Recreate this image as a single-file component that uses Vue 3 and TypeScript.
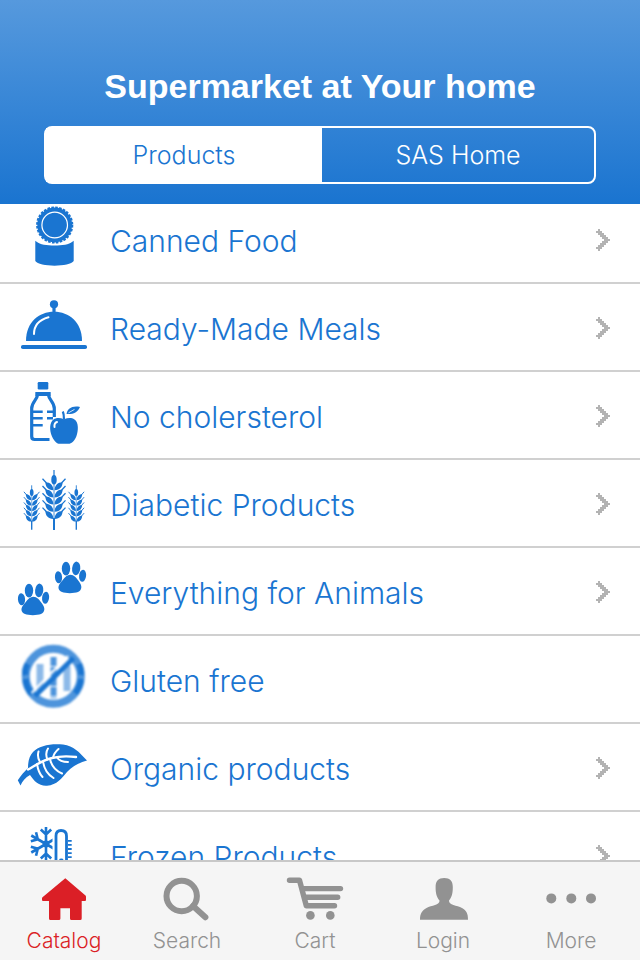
<script setup lang="ts">
import { ref } from 'vue'

type CategoryIcon = 'can' | 'cloche' | 'bottle' | 'wheat' | 'paws' | 'gluten' | 'leaf' | 'frozen'
type TabIcon = 'home' | 'search' | 'cart' | 'user' | 'dots'

interface Category {
  icon: CategoryIcon
  label: string
  hasChildren: boolean
}

interface Tab {
  icon: TabIcon
  label: string
}

const categories: Category[] = [
  { icon: 'can', label: 'Canned Food', hasChildren: true },
  { icon: 'cloche', label: 'Ready-Made Meals', hasChildren: true },
  { icon: 'bottle', label: 'No cholersterol', hasChildren: true },
  { icon: 'wheat', label: 'Diabetic Products', hasChildren: true },
  { icon: 'paws', label: 'Everything for Animals', hasChildren: true },
  { icon: 'gluten', label: 'Gluten free', hasChildren: false },
  { icon: 'leaf', label: 'Organic products', hasChildren: true },
  { icon: 'frozen', label: 'Frozen Products', hasChildren: true },
]

const tabs: Tab[] = [
  { icon: 'home', label: 'Catalog' },
  { icon: 'search', label: 'Search' },
  { icon: 'cart', label: 'Cart' },
  { icon: 'user', label: 'Login' },
  { icon: 'dots', label: 'More' },
]

const segments = ['Products', 'SAS Home']
const activeSegment = ref('Products')
const activeTab = ref('Catalog')

// Wheat ears: placement of each ear inside the icon.
const ears = [
  'translate(54 10)',
  'translate(31.7 25.3) scale(.68 .74)',
  'translate(76.3 25.3) scale(.68 .74)',
]
const grainRows = [16, 23.2, 30.4, 37.6, 44.8]
</script>

<template>
  <div class="app">
    <header class="header">
      <h1 class="title">Supermarket at Your home</h1>
      <div class="segmented">
        <button
          v-for="segment in segments"
          :key="segment"
          type="button"
          class="segment"
          :class="{ active: segment === activeSegment }"
          :aria-pressed="segment === activeSegment"
          @click="activeSegment = segment"
        >
          {{ segment }}
        </button>
      </div>
    </header>

    <main class="content">
      <ul class="list">
        <li v-for="category in categories" :key="category.label">
          <a href="#" class="row" @click.prevent>
            <svg class="row-icon" viewBox="0 0 88 86" aria-hidden="true">
              <template v-if="category.icon === 'can'">
                <circle cx="54.7" cy="29" r="17.4" />
                <circle class="line" cx="54.7" cy="29" r="17.6" stroke-width="2" stroke-dasharray="2.6 1.35" />
                <circle class="line light" cx="54.7" cy="29" r="12.8" stroke-width="1.2" />
                <path d="M35.3 44.8 37 46C42 50.8 67 50.8 72 46L73.7 44.8V65C70 71.2 39 71.2 35.3 65Z" />
              </template>
              <template v-else-if="category.icon === 'cloche'">
                <circle cx="54" cy="20.3" r="4.1" />
                <path d="M52.4 22h3.2v6.2h-3.2z" />
                <path d="M26 57C26 38 39 27.7 54 27.7S82 38 82 57Z" />
                <path class="line light round" d="M34 50C34 41.5 39.5 35.7 48.5 33.2" stroke-width="2" />
                <rect x="21" y="61" width="66" height="4" rx="1.8" />
              </template>
              <template v-else-if="category.icon === 'bottle'">
                <rect x="37.7" y="10" width="10.6" height="7.4" rx="1.2" />
                <rect x="35.3" y="20" width="15.4" height="4" rx=".6" />
                <path class="line" d="M37.5 23C37 28 31.7 30 31.7 36.5V64.5Q31.7 67.5 34.7 67.5H49.5M48.5 23C49 28 54.3 30 54.3 36.5V45" stroke-width="3.2" />
                <path class="line" d="M32 39.7H42.7M32 46.2H42.7M32 53.2H42.7M47 39.7H54M47 46.2H53" stroke-width="2.6" />
                <path d="M64 47.3C60 45.5 56 45.5 53.5 47.5C49.5 50.5 49.2 58 52 64.5C55 71 58 72 60 71.7H68C71 72 74 70 76.3 64.5C78.5 58.5 78.8 50.5 74.5 47.5C71.5 45.5 68 45.7 64 47.3Z" />
                <path class="line" d="M64 47.5Q64 42 62.8 39.5" stroke-width="2.2" />
                <path class="line light round" d="M54.5 55Q54 51 57 50" stroke-width="2" />
                <path d="M66.5 42C67.5 36.5 72 33.5 80 35C77.5 40.5 73 42.5 66.5 42Z" />
                <path class="line light" d="M68.5 40.8 74.5 37.4" stroke-width=".8" />
              </template>
              <template v-else-if="category.icon === 'wheat'">
                <g v-for="ear in ears" :key="ear" :transform="ear">
                  <path class="line" d="M0 0V8" stroke-width="1.2" />
                  <path class="line" d="M0 8V50" stroke-width=".8" />
                  <path class="line" d="M0 48V60" stroke-width="2" />
                  <ellipse cx="0" cy="9.8" rx="2.7" ry="4.8" />
                  <g v-for="y in grainRows" :key="y" :transform="`translate(0 ${y})`">
                    <path d="M-.6 4.2C-6 4.2-8.6 .4-8.6-3.8C-3.5-3.8-.6-.5-.6 4.2ZM.6 4.2C6 4.2 8.6 .4 8.6-3.8C3.5-3.8 .6-.5 .6 4.2Z" />
                    <path class="line" d="M-7.5-3-11.5-7.2M7.5-3 11.5-7.2" stroke-width="1.3" />
                  </g>
                </g>
              </template>
              <template v-else-if="category.icon === 'paws'">
                <g v-for="place in ['translate(0 0)', 'translate(37 -22)']" :key="place" :transform="place">
                  <path d="M33.3 48.7C37 48.7 39.5 52 42 55.5C45.5 60 45 64 41 66C37 67.5 28.5 67.5 25 66C20.5 64 20.3 60 24.5 55.5C27 52.5 29.5 48.7 33.3 48.7Z" />
                  <ellipse cx="21.5" cy="51.3" rx="3.6" ry="6" transform="rotate(-5 21.5 51.3)" />
                  <ellipse cx="29" cy="42.6" rx="4.2" ry="6.8" />
                  <ellipse cx="39.2" cy="42.4" rx="4.1" ry="6.8" transform="rotate(6 39.2 42.4)" />
                  <ellipse cx="45.6" cy="49.7" rx="3.5" ry="6" transform="rotate(6 45.6 49.7)" />
                </g>
              </template>
              <g v-else-if="category.icon === 'gluten'" class="soft">
                <circle class="line faded" cx="53.3" cy="40.3" r="27.5" stroke-width="8" />
                <path class="line" d="M27.5 28Q24 34 25.5 39M25.5 43Q26 52 32 58M79 28Q82 34 81 39M81 43Q80 52 75 57" stroke-width="6" />
                <path class="line pale" d="M40 28V55M67 30V55" stroke-width="7" />
                <path class="line faded" d="M53.5 21V62" stroke-width="6" stroke-dasharray="9 1" />
                <path class="line light" d="M31.5 57 68 20" stroke-width="2" />
                <path class="line" d="M35 60 73.5 22" stroke-width="5" />
              </g>
              <template v-else-if="category.icon === 'leaf'">
                <path d="M87 36.5C79 28 74 22 63 20.5C51 19.3 39 21.5 33 28C29.5 32 28 37 28 44C24.5 47.5 21 51 17.8 56.3L20.5 61.5C22.5 57 25.5 53.5 30 51C34 57 39 62.3 47 61.7C57 61 62 54 67 48C72.5 42 79 39 87 36.5Z" />
                <path class="line light round" d="M28 45.5C36 41 43 36 52 34C60 32 67 32 76 33" stroke-width="2.4" />
                <path class="line light round" d="M40 38C37.5 34 37.5 31 38.5 27.5M47.5 35.5C45.5 31 46 27.5 48 24.5M53 34C53.5 30.5 55 28 58.5 25M37 40C38 46 39.5 50 42.5 53M43 37.5C44 44 47.5 50.5 53.5 54M50 35C51.5 42 56 47 62 49.5M57 33.5C59 36.5 63 38 68 38" stroke-width="2" />
              </template>
              <template v-else>
                <g v-for="angle in [0, 60, 120, 180, 240, 300]" :key="angle" :transform="`translate(46 32) rotate(${angle})`">
                  <path class="line" d="M0 0V-17M-5.2-14.5 0-9.5 5.2-14.5" stroke-width="2.6" />
                </g>
                <circle cx="46" cy="32" r="3.4" />
                <rect class="mask" x="52.5" y="12" width="20" height="50" />
                <path class="line" d="M56 58V24Q56 18.5 61 18.5Q66.5 18.5 66.5 24V58" stroke-width="2.8" />
                <path class="line" d="M68 28.8H71.7M68 32.9H71.7M68 37H71.7M68 41.1H71.7M68 45.2H71.7" stroke-width="1.8" />
                <circle cx="61.3" cy="49" r="2.4" />
              </template>
            </svg>
            <span class="row-label">{{ category.label }}</span>
            <svg v-if="category.hasChildren" class="chevron" viewBox="0 0 7 11" aria-hidden="true">
              <path d="M1 0H2V1H3V2H4V3H5V4H6V5H7V6H6V7H5V8H4V9H3V10H2V11H1V10H0V9H1V8H2V7H3V6H4V5H3V4H2V3H1V2H0V1H1Z" />
            </svg>
          </a>
        </li>
      </ul>
    </main>

    <nav class="tabbar">
      <a
        v-for="tab in tabs"
        :key="tab.label"
        href="#"
        class="tab"
        :class="{ active: tab.label === activeTab }"
        @click.prevent="activeTab = tab.label"
      >
        <svg class="tab-icon" viewBox="0 0 60 44" aria-hidden="true">
          <path
            v-if="tab.icon === 'home'"
            d="M31.3 1.2 51.5 18.6Q52 19 52 20V23Q52 24 51 24H47.7V41.5Q47.7 43 46.2 43H37.5Q36 43 36 41.5V31.3H26.4V41.5Q26.4 43 24.9 43H16.5Q15 43 15 41.5V24H9Q8 24 8 23V21.3Q8 20.8 8.5 20.3Z"
          />
          <template v-else-if="tab.icon === 'search'">
            <circle class="line" cx="24.7" cy="19" r="15.2" stroke-width="6" />
            <path class="line round" d="M36 29 48.4 40.3" stroke-width="6" />
          </template>
          <template v-else-if="tab.icon === 'cart'">
            <path class="line round" d="M4.5 3.2H14.5L21.3 28.8H49.5" stroke-width="5.4" />
            <path class="line round" d="M18 11.6H55.5M20 20.2H52.7" stroke-width="5.4" />
            <circle cx="25.4" cy="38.4" r="4.3" />
            <circle cx="45.3" cy="38.4" r="4.3" />
          </template>
          <path
            v-else-if="tab.icon === 'user'"
            d="M31.2 1C37 1 39.8 4 39.8 10C39.8 16 39 20 36 23.5C35.5 28 44 28.3 49 31C53.5 33.5 55 36.5 55 42.7H7C7 36.5 9 33.5 13.5 31C18.5 28.3 27 28 26.5 23.5C23.5 20 22.6 16 22.6 10C22.6 4 25.4 1 31.2 1Z"
          />
          <template v-else>
            <circle cx="10.3" cy="21.4" r="5" />
            <circle cx="30.3" cy="21.4" r="5" />
            <circle cx="50" cy="21.4" r="5" />
          </template>
        </svg>
        <span>{{ tab.label }}</span>
      </a>
    </nav>
  </div>
</template>

<style>
body {
  margin: 0;
}
</style>

<style scoped>
.app {
  display: flex;
  flex-direction: column;
  height: 100vh;
  background: #fff;
  color: #1a75d1;
  font-family: Inter, "Liberation Sans", sans-serif;
  font-weight: 300;
}

.header {
  position: relative;
  z-index: 1;
  padding: 66px 44px 20px;
  background: linear-gradient(#5699dd, #1a74d0);
}

.title {
  margin: 0 0 20px;
  color: #fff;
  font-family: "Liberation Sans", sans-serif;
  font-size: 34px;
  font-weight: 700;
  line-height: 40px;
  text-align: center;
  white-space: nowrap;
}

.segmented {
  display: flex;
  height: 54px;
  border: 2px solid #fff;
  border-radius: 8px;
}

.segment {
  flex: 1;
  padding: 0;
  border: 0;
  background: transparent;
  color: #fff;
  font: inherit;
  font-size: 25px;
  cursor: pointer;
}

.segment.active {
  flex-basis: 4px;
  background: #fff;
  color: #1a75d1;
}

.content {
  flex: 1;
  min-height: 0;
  overflow: hidden;
}

.list {
  margin: -8px 0 0;
  padding: 0;
  list-style: none;
}

.row {
  display: flex;
  align-items: center;
  height: 86px;
  padding-right: 30px;
  border-bottom: 2px solid #d0d0d0;
  color: inherit;
  text-decoration: none;
}

.row-icon {
  flex: none;
  width: 88px;
  height: 86px;
  margin-right: 22px;
  fill: #1a75d1;
}

.row-label {
  flex: 1;
  padding-top: 4px;
  font-size: 30px;
  line-height: 40px;
}

.line {
  fill: none;
  stroke: #1a75d1;
}

.light {
  stroke: #fff;
}

.mask {
  fill: #fff;
}

.faded {
  stroke: #4d94dc;
}

.pale {
  stroke: #8cb9e8;
}

.round {
  stroke-linecap: round;
  stroke-linejoin: round;
}

.soft {
  filter: blur(1px);
}

.chevron {
  flex: none;
  width: 14px;
  height: 22px;
  margin-top: 2px;
  fill: #b3b3b3;
}

.tabbar {
  display: flex;
  height: 98px;
  padding-right: 5px;
  border-top: 2px solid #c8c8c8;
  background: #f5f5f5;
}

.tab {
  display: flex;
  flex: 1;
  flex-direction: column;
  align-items: center;
  gap: 1px;
  padding-top: 15px;
  color: #929292;
  font-size: 21px;
  line-height: 38px;
  text-decoration: none;
}

.tab:first-child {
  margin-right: -5px;
}

.tab.active {
  color: #db1f26;
}

.tab-icon {
  flex: none;
  width: 60px;
  height: 44px;
  fill: currentColor;
}

.tab-icon .line {
  fill: none;
  stroke: currentColor;
}
</style>
